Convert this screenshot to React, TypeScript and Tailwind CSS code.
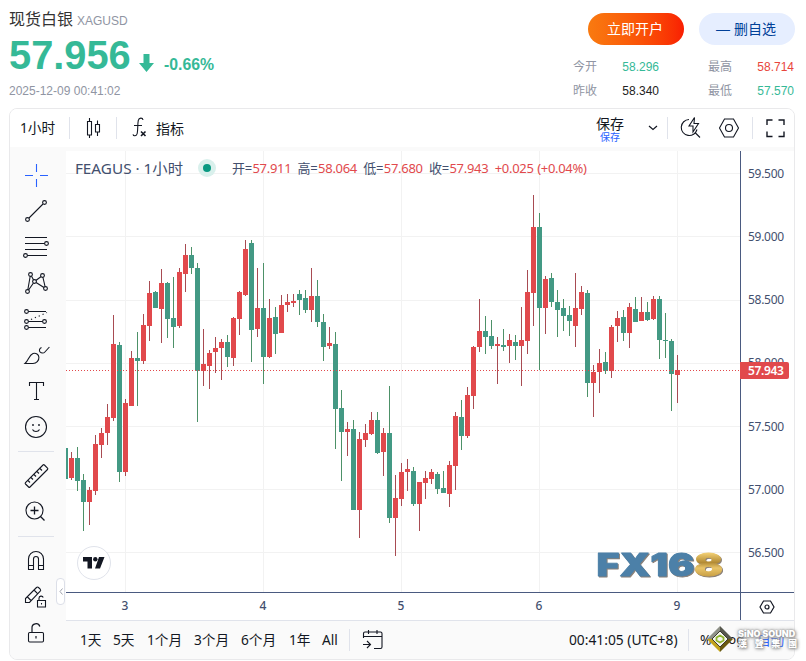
import React from "react";

// One candle every 6px: [wick top, body top, body bottom, wick bottom, rising]
const candles: [number, number, number, number, number][] = [
  [448, 448, 479, 479, 0], [452, 458, 478, 480, 1], [447, 458, 481, 491, 0], [474, 480, 502, 531, 0],
  [487, 490, 502, 525, 1], [435, 444, 491, 495, 1], [428, 433, 445, 458, 1], [404, 417, 433, 445, 1],
  [315, 344, 418, 421, 1], [342, 345, 472, 482, 0], [399, 403, 472, 476, 1], [351, 358, 406, 406, 1],
  [332, 358, 361, 406, 0], [314, 325, 361, 364, 1], [281, 293, 326, 341, 1], [291, 292, 308, 308, 0],
  [269, 283, 309, 343, 1], [282, 283, 319, 338, 0], [277, 318, 327, 348, 0], [268, 272, 326, 328, 1],
  [244, 255, 274, 292, 1], [247, 255, 268, 274, 0], [263, 268, 371, 422, 0], [329, 364, 371, 386, 1],
  [350, 353, 366, 389, 1], [337, 348, 352, 373, 1], [339, 342, 348, 380, 1], [335, 342, 357, 367, 0],
  [317, 318, 358, 366, 1], [291, 292, 319, 335, 1], [240, 249, 295, 296, 1], [240, 243, 330, 362, 0],
  [268, 308, 329, 337, 1], [263, 308, 357, 384, 0], [299, 318, 357, 358, 1], [307, 317, 334, 354, 0],
  [295, 305, 333, 333, 1], [294, 302, 305, 312, 1], [294, 301, 303, 307, 1], [290, 294, 300, 315, 0],
  [290, 298, 310, 313, 0], [268, 296, 310, 322, 1], [280, 296, 322, 327, 0], [314, 322, 347, 361, 0],
  [327, 343, 346, 349, 1], [332, 344, 409, 449, 0], [390, 408, 432, 481, 0], [422, 429, 432, 456, 1],
  [420, 429, 510, 510, 0], [432, 439, 510, 538, 1], [424, 433, 440, 447, 1], [412, 420, 434, 435, 1],
  [412, 420, 453, 454, 0], [428, 433, 452, 476, 1], [386, 433, 518, 523, 0], [475, 498, 518, 556, 1],
  [463, 472, 499, 506, 1], [459, 469, 472, 491, 1], [467, 471, 504, 506, 0], [482, 482, 504, 531, 1],
  [471, 478, 483, 499, 1], [469, 472, 479, 484, 1], [472, 474, 489, 494, 0], [471, 488, 493, 493, 0],
  [461, 465, 494, 507, 1], [412, 416, 466, 490, 1], [400, 417, 436, 450, 0], [387, 395, 436, 438, 1],
  [346, 347, 396, 409, 1], [299, 331, 347, 352, 1], [316, 331, 337, 354, 0], [320, 336, 346, 349, 0],
  [337, 344, 346, 384, 1], [329, 345, 347, 351, 0], [334, 340, 346, 363, 1], [335, 342, 346, 360, 0],
  [307, 340, 346, 386, 1], [270, 292, 341, 354, 1], [195, 227, 293, 326, 1], [213, 227, 308, 370, 0],
  [276, 279, 308, 334, 1], [273, 278, 302, 307, 0], [290, 302, 310, 337, 0], [299, 308, 316, 331, 0],
  [306, 315, 321, 336, 0], [273, 308, 326, 347, 1], [286, 292, 309, 315, 1], [290, 293, 383, 397, 0],
  [365, 372, 383, 417, 1], [349, 363, 372, 393, 1], [352, 362, 371, 374, 0], [325, 327, 371, 378, 1],
  [311, 318, 326, 342, 1], [310, 317, 333, 341, 0], [303, 307, 333, 348, 1], [297, 309, 322, 322, 0],
  [297, 312, 321, 321, 1], [302, 312, 320, 321, 0], [296, 299, 319, 320, 1], [296, 299, 340, 359, 0],
  [313, 340, 341, 358, 0], [339, 341, 374, 411, 0], [355, 370, 375, 403, 1],
];

const gridX = [125, 263, 401, 539, 677];
const gridY = [173, 236, 300, 363, 426, 489, 552];

function Chart() {
  return (
    <svg className="block h-[441px] w-[674px]" viewBox="66 151 674 441" shapeRendering="crispEdges">
      {gridX.map((x) => <rect key={x} x={x} y="151" width="1" height="441" fill="#f2f2f2" />)}
      {gridY.map((y) => <rect key={y} x="66" y={y} width="674" height="1" fill="#f2f2f2" />)}
      {candles.map(([h, t, b, l, up], i) => {
        const x = 65 + i * 6;
        return (
          <g key={i}>
            {i > 0 && <rect x={x} y={h} width="1" height={l - h} fill={up ? "#a84b52" : "#4d9168"} />}
            <rect x={x - 2} y={t} width="5" height={b - t} fill={up ? "#e1494c" : "#439984"} />
          </g>
        );
      })}
      <line x1="66" x2="740" y1="370.5" y2="370.5" stroke="#e1494c" strokeDasharray="1 2" />
    </svg>
  );
}

function Icon({ children, className = "" }: { children: React.ReactNode; className?: string }) {
  return (
    <svg className={`block size-7 shrink-0 ${className}`} viewBox="0 0 28 28" fill="none" stroke="#131722" strokeWidth="1.1">
      {children}
    </svg>
  );
}

function Tool({ children, className = "" }: { children: React.ReactNode; className?: string }) {
  return (
    <div className="flex h-9 w-full shrink-0 items-center pl-3">
      <Icon className={className}>{children}</Icon>
    </div>
  );
}

function Dot({ x, y }: { x: number; y: number }) {
  return <circle cx={x} cy={y} r="1.9" fill="#fafafa" />;
}

function SideBar() {
  return (
    <div className="relative flex w-14 flex-col overflow-hidden bg-[#fafafa] pt-[10px]">
      <Tool><path stroke="#2962ff" d="M14.5 3v8M14.5 18v8M3 14.5h8M18 14.5h8" /></Tool>
      <Tool><path d="M7 21 21 7" /><Dot x={22.5} y={5.5} /><Dot x={5.5} y={22.5} /></Tool>
      <Tool>
        <path d="M3 4.5h22M3 10.5h20M3 16.5h22M5 22.5h20" /><Dot x={24.5} y={10.5} /><Dot x={3.5} y={22.5} />
      </Tool>
      <Tool>
        <path d="M8.500 5.500 5.500 22.500 12.500 12.500zM12.500 12.500l8-6M12.500 12.500l11 7M20.500 6.500l3 13" />
        <Dot x={8.5} y={5.5} /><Dot x={5.5} y={22.5} /><Dot x={12.5} y={12.5} /><Dot x={20.5} y={6.5} /><Dot x={23.5} y={19.5} />
      </Tool>
      <Tool>
        <path d="M6 6.500h18M6 16.500h15M6 22.500h18" />
        <path strokeDasharray="1.200 3" d="M9 14.500 25 7.500" />
        <Dot x={4.5} y={6.5} /><Dot x={4.5} y={16.5} /><Dot x={4.5} y={22.5} /><Dot x={22.5} y={16.5} />
      </Tool>
      <Tool>
        <path d="M3 22.500c3.500-3 4-8.500 8-10 3-1 5.700 1 5.900 3.800.2 3.500-2.500 6.200-5.900 6.200zM19.500 6.500c-2.300 1-2.500 3-1.500 4.300 1.500 1.700 3.700 1.500 4.900.2l4.500-5" />
      </Tool>
      <Tool><path d="M7.500 9V5.500h14V9M14.500 5.500v17M12 22.500h5" /></Tool>
      <Tool>
        <circle cx="14" cy="14" r="10.500" />
        <path d="M10.500 16.500c1.300 2.600 5.700 2.600 7 0" />
        <circle cx="11" cy="12" r=".4" /><circle cx="17" cy="12" r=".4" />
      </Tool>
      <div className="mt-[6px] ml-2 h-px w-9 shrink-0 bg-[#e0e3eb]" />
      <div className="h-[6px] shrink-0" />
      <Tool>
        <path d="M21 3a1 1 0 0 1 1.400 0L25.500 6.100a1 1 0 0 1 0 1.400L8 25a1 1 0 0 1-1.400 0L3.500 22a1 1 0 0 1 0-1.400zM6 18.500l2 2M9 15.500l2 2M12 12.500l2 2M15 9.500l2 2M18 6.500l2 2" />
      </Tool>
      <Tool>
        <circle cx="12.500" cy="12.500" r="8.500" /><path d="M12.500 8.500v8M8.500 12.500h8M18.500 18.500l4 4" strokeWidth="1.300" />
      </Tool>
      <div className="mt-[6px] ml-2 h-px w-9 shrink-0 bg-[#e0e3eb]" />
      <div className="h-[6px] shrink-0" />
      <Tool>
        <path d="M6.500 22.500V12a7.500 7.500 0 0 1 15 0v10.500h-5V12a2.500 2.500 0 0 0-5 0v10.500zM6.500 18.500h5M16.500 18.500h5" />
      </Tool>
      <Tool>
        <path d="M3.500 19.500v-4L14.500 4.500q1-1 2 0l1.700 1.700q1 1 0 2L7.500 19.500zM5.500 14l3.500 3.500M12 7l3.800 3.800M15.500 17.500h8v6.500h-8zM17 17.500v-2.300c0-2.500 3.500-2.700 4.200-.7M19.500 20v1.500" />
      </Tool>
      <Tool>
        <rect x="6.500" y="13.500" width="15" height="9.500" rx="1.200" />
        <path d="M10 13.500V9a4 4 0 0 1 7.800-1.500M14 17v2.500" strokeWidth="1.200" />
      </Tool>
      <Tool className="-mt-[3px]"><path d="M3 14s4-7 11-7 11 7 11 7" /></Tool>
    </div>
  );
}

function Hex({ className = "" }: { className?: string }) {
  return (
    <Icon className={className}>
      <path d="M4.500 14 9.500 5h9l5 9-5 9h-9z" /><circle cx="14" cy="14" r="3.500" />
    </Icon>
  );
}

function Divider() {
  return <div className="h-[22px] w-px shrink-0 bg-[#e0e3eb]" />;
}

function TopBar() {
  return (
    <div className="flex h-[38px] items-center bg-white text-[14px] text-[#131722]">
      <span className="w-[59px] pl-[10px] text-[13.700px] whitespace-nowrap">1小时</span>
      <Divider />
      <div className="flex w-[46px] justify-center pl-[2px]">
        <Icon><path strokeWidth="1.100" d="M9.500 4v3M9.500 21v3M7.500 7.500h4v13.500h-4zM17.500 6.500v4M17.500 18v4M15.500 10.500h4V18h-4z" /></Icon>
      </div>
      <Divider />
      <div className="flex w-[39px] pl-[9px]">
        <Icon>
          <path d="M17 6c-.3-2.500-4-2.500-4.700.3C11.500 10 12 16 11.200 19.500c-.6 2.800-3.700 3-4.200.8M8 11.500h8" />
          <path strokeWidth="1.600" d="M15 17.500l4.500 4.500M19.500 17.500 15 22" />
        </Icon>
      </div>
      <span>指标</span>
      <div className="flex-1" />
      <div className="flex w-7 flex-col items-center pt-[3px] whitespace-nowrap">
        <span className="leading-[15px]">保存</span>
        <span className="text-[10px] leading-[12px] text-[#2962ff]">保存</span>
      </div>
      <svg className="mr-[9px] ml-[24px] h-[6px] w-[10px]" viewBox="0 0 10 6" fill="none" stroke="#131722" strokeWidth="1.200"><path d="M1 1l4 3.500L9 1" /></svg>
      <Divider />
      <Icon className="ml-[9px]">
        <path d="M12 5.500a8 8 0 1 0 8 10M18.500 19l4.500 4.500M17.500 3.500 12 12h4v6l5.500-8.500h-4.500z" />
      </Icon>
      <Hex className="ml-[10px]" />
      <div className="w-[9px]" />
      <Divider />
      <Icon className="mr-[5px] ml-[8px]"><path strokeWidth="1.400" d="M6 11V6H11.500M17.500 6H23v5M23 17.500v5h-5.500M11.500 22.500H6v-5" /></Icon>
    </div>
  );
}

function Stat({ label, value, color }: { label: string; value: string; color: string }) {
  return (
    <div className="flex justify-between">
      <span className="text-[#9095a3]">{label}</span>
      <span className={color}>{value}</span>
    </div>
  );
}

function Header() {
  return (
    <header className="flex h-[108px] justify-between pl-[9px] font-['Liberation_Sans','Noto_Sans_CJK_SC',sans-serif]">
      <div>
        <div className="mt-[7px] flex h-6 items-center leading-6 whitespace-nowrap">
          <span className="pt-px text-[16px] text-[#333]">现货白银</span>
          <span className="ml-1 pt-[3px] text-[12px] text-[#9095a3]">XAGUSD</span>
        </div>
        <div className="flex h-[50px] text-[#35b997]">
          <span className="-mt-px w-[121px] text-[39.800px] leading-[50px] font-bold">57.956</span>
          <svg className="mt-[23px] ml-[9px] h-[18px] w-[15px]" viewBox="0 0 15 18"><path fill="#35b997" d="M4.500 0h6v9H15l-7.500 9L0 9h4.500z" /></svg>
          <span className="mt-[22px] ml-[10px] text-[15.800px] leading-6 font-bold">-0.66%</span>
        </div>
        <div className="mt-[2px] text-[12px] leading-4 text-[#9095a3]">2025-12-09 00:41:02</div>
      </div>
      <div className="mr-[11px] w-[222px] pt-[13px]">
        <div className="flex justify-between pl-[15px] text-[14px]">
          <button className="h-8 w-24 rounded-full bg-linear-to-r from-[#f97a10] to-[#f91d02] pr-[2px] text-white">立即开户</button>
          <button className="h-8 w-24 rounded-full bg-[#e6eeff] pr-[2px] text-[#004098]">— 删自选</button>
        </div>
        <div className="mt-[10px] mr-px grid grid-cols-[86px_86px] justify-between text-[12px] leading-6">
          <Stat label="今开" value="58.296" color="text-[#35b997]" />
          <Stat label="最高" value="58.714" color="text-[#e8453c]" />
          <Stat label="昨收" value="58.340" color="text-[#222]" />
          <Stat label="最低" value="57.570" color="text-[#35b997]" />
        </div>
      </div>
    </header>
  );
}

const ohlc = [["开", "57.911"], ["高", "58.064"], ["低", "57.680"], ["收", "57.943"]];

function Legend() {
  return (
    <div className="absolute top-[8px] left-[9px] flex h-5 items-center whitespace-nowrap text-[#434f6e]">
      <span className="-mt-px w-[123px] text-[15.300px]">FEAGUS · 1小时</span>
      <span className="-mt-[2px] flex size-[18px] items-center justify-center rounded-full bg-[#d9f0ec]">
        <span className="size-2 rounded-full bg-[#089981]" />
      </span>
      <div className="ml-4 flex text-[13px] tracking-[-0.300px]">
        {ohlc.map(([k, v]) => (
          <span key={k} className="flex w-[65.700px]">
            <span className="w-[20.500px]">{k}=</span><span className="text-[#e1494c]">{v}</span>
          </span>
        ))}
        <span className="w-[42.500px] text-[#e1494c]">+0.025</span>
        <span className="text-[#e1494c]">(+0.04%)</span>
      </div>
    </div>
  );
}

function Fx168() {
  return (
    <svg className="absolute top-[390px] left-[529px] h-[48px] w-[134px] overflow-visible" viewBox="0 -6 134 48">
      <defs>
        <linearGradient id="gold" x1="0" y1="0" x2="0" y2="1">
          <stop offset="0.2" stopColor="#f0cd72" /><stop offset=".45" stopColor="#b38b34" />
          <stop offset=".6" stopColor="#e9c468" /><stop offset="0.85" stopColor="#c79d42" />
        </linearGradient>
      </defs>
      <g className="font-['Inter',sans-serif] text-[31px] font-black [filter:drop-shadow(1.5px_1px_0.5px_#8a8078)]" strokeWidth=".8" strokeLinejoin="round">
        <text x="1.500" y="28.800" fill="#4c80a8" stroke="#4c80a8" textLength="98" lengthAdjust="spacingAndGlyphs">FX16</text>
        <text x="99" y="28.800" fill="url(#gold)" stroke="url(#gold)" textLength="29" lengthAdjust="spacingAndGlyphs">8</text>
      </g>
    </svg>
  );
}

function TvLogo() {
  return (
    <div className="absolute top-[395px] left-[11px] flex size-[34px] items-center justify-center rounded-full border border-[#e0e3eb] bg-white">
      <svg className="h-[12px] w-[22px]" viewBox="0 0 22 12" fill="#131722">
        <path d="M0 0h9v11.500H4.500V4.500H0zM16 0h5.500L17 11.500h-5z" /><circle cx="12.300" cy="2.200" r="2.200" />
      </svg>
    </div>
  );
}

const prices = ["59.500", "59.000", "58.500", "58.000", "57.500", "57.000", "56.500"];

function ChartArea() {
  return (
    <div className="flex w-[729px] flex-col">
      <div className="h-1 bg-[#fafafa]" />
      <div className="flex h-[441px] overflow-hidden rounded-tl bg-white">
        <div className="relative w-[674px]">
          <Chart />
          <Legend />
          <TvLogo />
          <Fx168 />
        </div>
        <div className="relative w-[54px] border-l border-[#4a5a80] text-[12px] tracking-[-0.250px] text-[#434f6e]">
          <div className="-mt-[9px]">
            {prices.map((p) => <div key={p} className="flex h-[63.270px] items-center pl-[7px]">{p}</div>)}
          </div>
          <div className="absolute top-[211px] -left-px flex h-[17px] w-[49px] items-center rounded-r-xs bg-[#e1494c] pl-2 text-[12px] font-semibold tracking-[-0.350px] text-white">57.943</div>
        </div>
      </div>
      <div className="flex h-[28px] border-t border-[#4a5a80] bg-white text-[12px] font-medium text-[#434f6e]">
        <div className="flex w-[674px] items-center pb-[2px] text-center">
          <span className="w-[128px] pr-[10px]">3</span><span className="w-[138px]">4</span><span className="w-[138px]">5</span>
          <span className="w-[138px]">6</span><span className="w-[132px] pl-[6px]">9</span>
        </div>
        <div className="flex w-[54px] items-center justify-center border-l border-[#4a5a80]">
          <svg className="h-[14px] w-[16px]" viewBox="0 0 16 14" fill="none" stroke="#131722" strokeWidth="1.200"><path d="M1 7l3.500-6h7L15 7l-3.500 6h-7z" /><circle cx="8" cy="7" r="2" /></svg>
        </div>
      </div>
      <div className="flex h-[39px] items-center border-t border-[#e0e3eb] bg-[#fafafa] pl-[14px] text-[13.700px] whitespace-nowrap text-[#131722]">
        <span className="w-[33px]">1天</span><span className="w-[34px]">5天</span><span className="w-[47px]">1个月</span>
        <span className="w-[47px]">3个月</span><span className="w-[48px]">6个月</span><span className="w-[33px]">1年</span>
        <span className="w-[27px]">All</span>
        <Divider />
        <Icon className="ml-[9px]">
          <path d="M4.500 12V7.500q0-1.500 1.500-1.500h15.500q1.500 0 1.500 1.500V21q0 1.500-1.500 1.500H15M4.500 10.500H23M9.500 4v4M18 4v4M4 18.500h7M8 15l3.500 3.500L8 22" />
        </Icon>
        <span className="ml-[182px] w-[119px] text-[13.800px]">00:41:05 (UTC+8)</span>
        <Divider />
        <span className="ml-[11px] w-[25px]">%</span><span className="w-[32px] text-[13px]">log</span><span className="text-[#2962ff]">自动</span>
      </div>
    </div>
  );
}

function SinoSound() {
  return (
    <div className="absolute top-[626px] left-[706px] flex items-center">
      <svg className="h-[26px] w-[28px]" viewBox="0 0 28 26">
        <path fill="#57584e" d="M14 0l13 13H14z" /><path fill="#8f9188" d="M14 0 1 13h13z" />
        <path fill="#c2a31d" d="M1 13l13 13V13z" /><path fill="#6b5a10" d="M27 13 14 26V13z" />
        <path fill="#f5f5ee" stroke="#3a3a32" d="M14 5l8 8-8 8-8-8z" />
        <path fill="none" stroke="#8fb52e" strokeWidth="1.800" d="M14 9.500l3.500 2v3l-3.500 2-3.500-2v-3z" />
      </svg>
      <div className="ml-[4px] w-[59px] font-['Inter','Noto_Sans_CJK_TC',sans-serif] font-black whitespace-nowrap text-white [text-shadow:0_0_2px_#888,0_0_4px_#999,1px_1px_3px_#999]">
        <div className="text-[9px] leading-[10px]">SiNO SOUND</div>
        <div className="flex justify-between text-[9px] leading-[10px]"><span>漢</span><span>聲</span><span>集</span><span>團</span></div>
      </div>
    </div>
  );
}

export default function App() {
  return (
    <div className="relative h-[661px] w-[806px] overflow-hidden bg-white">
      <Header />
      <main className="relative ml-[9px] h-[552px] w-[786px] overflow-hidden rounded-lg border border-[#e9e9eb] font-['Noto_Sans','Noto_Sans_CJK_SC',sans-serif]">
        <TopBar />
        <div className="flex h-[512px]">
          <SideBar />
          <ChartArea />
        </div>
        <div className="absolute top-[469px] left-[46px] flex h-[27px] w-[9px] items-center justify-center rounded-[4px] border border-[#dcdfe8] bg-white">
          <svg className="h-[7px] w-[4px]" viewBox="0 0 4 7" fill="none" stroke="#a0a3ad"><path d="M3.500.5 1 3.500l2.500 3" /></svg>
        </div>
      </main>
      <SinoSound />
    </div>
  );
}
